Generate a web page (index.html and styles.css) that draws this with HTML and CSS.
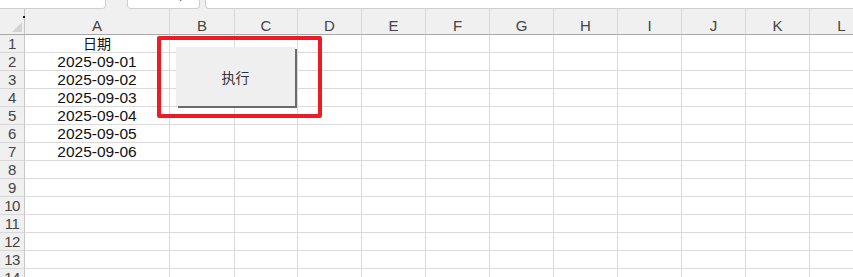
FILE: index.html
```html
<!DOCTYPE html>
<html lang="zh">

<head>
  <meta charset="UTF-8">
  <title>Sheet1</title>
  <link rel="stylesheet" href="styles.css">
</head>

<body>
  <div class="topbar">
    <div class="box box-name"></div>
    <div class="box box-fx"><span class="fx-mark">ʲ</span></div>
    <div class="box box-formula"></div>
  </div>

  <div class="sheet">
    <div class="grid">
      <div class="corner"><span class="dot"></span><span class="tri"></span></div>
      <div class="colhead">A</div>
      <div class="colhead">B</div>
      <div class="colhead">C</div>
      <div class="colhead">D</div>
      <div class="colhead">E</div>
      <div class="colhead">F</div>
      <div class="colhead">G</div>
      <div class="colhead">H</div>
      <div class="colhead">I</div>
      <div class="colhead">J</div>
      <div class="colhead">K</div>
      <div class="colhead">L</div>

      <div class="rowhead">1</div>
      <div class="cell center cjk">日期</div>
      <div class="cell"></div><div class="cell"></div><div class="cell"></div><div class="cell"></div><div class="cell"></div><div class="cell"></div><div class="cell"></div><div class="cell"></div><div class="cell"></div><div class="cell"></div><div class="cell"></div>

      <div class="rowhead">2</div>
      <div class="cell center">2025-09-01</div>
      <div class="cell"></div><div class="cell"></div><div class="cell"></div><div class="cell"></div><div class="cell"></div><div class="cell"></div><div class="cell"></div><div class="cell"></div><div class="cell"></div><div class="cell"></div><div class="cell"></div>

      <div class="rowhead">3</div>
      <div class="cell center">2025-09-02</div>
      <div class="cell"></div><div class="cell"></div><div class="cell"></div><div class="cell"></div><div class="cell"></div><div class="cell"></div><div class="cell"></div><div class="cell"></div><div class="cell"></div><div class="cell"></div><div class="cell"></div>

      <div class="rowhead">4</div>
      <div class="cell center">2025-09-03</div>
      <div class="cell"></div><div class="cell"></div><div class="cell"></div><div class="cell"></div><div class="cell"></div><div class="cell"></div><div class="cell"></div><div class="cell"></div><div class="cell"></div><div class="cell"></div><div class="cell"></div>

      <div class="rowhead">5</div>
      <div class="cell center">2025-09-04</div>
      <div class="cell"></div><div class="cell"></div><div class="cell"></div><div class="cell"></div><div class="cell"></div><div class="cell"></div><div class="cell"></div><div class="cell"></div><div class="cell"></div><div class="cell"></div><div class="cell"></div>

      <div class="rowhead">6</div>
      <div class="cell center">2025-09-05</div>
      <div class="cell"></div><div class="cell"></div><div class="cell"></div><div class="cell"></div><div class="cell"></div><div class="cell"></div><div class="cell"></div><div class="cell"></div><div class="cell"></div><div class="cell"></div><div class="cell"></div>

      <div class="rowhead">7</div>
      <div class="cell center">2025-09-06</div>
      <div class="cell"></div><div class="cell"></div><div class="cell"></div><div class="cell"></div><div class="cell"></div><div class="cell"></div><div class="cell"></div><div class="cell"></div><div class="cell"></div><div class="cell"></div><div class="cell"></div>

      <div class="rowhead">8</div>
      <div class="cell"></div><div class="cell"></div><div class="cell"></div><div class="cell"></div><div class="cell"></div><div class="cell"></div><div class="cell"></div><div class="cell"></div><div class="cell"></div><div class="cell"></div><div class="cell"></div><div class="cell"></div>

      <div class="rowhead">9</div>
      <div class="cell"></div><div class="cell"></div><div class="cell"></div><div class="cell"></div><div class="cell"></div><div class="cell"></div><div class="cell"></div><div class="cell"></div><div class="cell"></div><div class="cell"></div><div class="cell"></div><div class="cell"></div>

      <div class="rowhead">10</div>
      <div class="cell"></div><div class="cell"></div><div class="cell"></div><div class="cell"></div><div class="cell"></div><div class="cell"></div><div class="cell"></div><div class="cell"></div><div class="cell"></div><div class="cell"></div><div class="cell"></div><div class="cell"></div>

      <div class="rowhead">11</div>
      <div class="cell"></div><div class="cell"></div><div class="cell"></div><div class="cell"></div><div class="cell"></div><div class="cell"></div><div class="cell"></div><div class="cell"></div><div class="cell"></div><div class="cell"></div><div class="cell"></div><div class="cell"></div>

      <div class="rowhead">12</div>
      <div class="cell"></div><div class="cell"></div><div class="cell"></div><div class="cell"></div><div class="cell"></div><div class="cell"></div><div class="cell"></div><div class="cell"></div><div class="cell"></div><div class="cell"></div><div class="cell"></div><div class="cell"></div>

      <div class="rowhead">13</div>
      <div class="cell"></div><div class="cell"></div><div class="cell"></div><div class="cell"></div><div class="cell"></div><div class="cell"></div><div class="cell"></div><div class="cell"></div><div class="cell"></div><div class="cell"></div><div class="cell"></div><div class="cell"></div>

      <div class="rowhead">14</div>
      <div class="cell"></div><div class="cell"></div><div class="cell"></div><div class="cell"></div><div class="cell"></div><div class="cell"></div><div class="cell"></div><div class="cell"></div><div class="cell"></div><div class="cell"></div><div class="cell"></div><div class="cell"></div>
    </div>

    <!-- highlight + form button sit over the grid -->
    <div class="highlight"></div>
    <button class="run-btn">执行</button>
  </div>
</body>

</html>
```

FILE: styles.css
```css
* {
  margin: 0;
  padding: 0;
  box-sizing: border-box;
}

html,
body {
  width: 853px;
  height: 277px;
  overflow: hidden;
}

body {
  font-family: 'Liberation Sans', 'Noto Sans CJK SC', Arial, sans-serif;
  background: #f0f0f0;
  color: #111;
}

/* formula bar remnants at the very top */
.topbar {
  display: flex;
  height: 9px;
  background: #f0f0f0;
}

.box {
  height: 9px;
  background: #fff;
  border: 1px solid #cfcfcf;
  border-top: none;
  border-radius: 0 0 4px 4px;
  position: relative;
  overflow: hidden;
}

.box-name {
  width: 106px;
  border-left: none;
  border-radius: 0 0 4px 0;
}

.box-fx {
  width: 73px;
  margin-left: 21px;
}

.fx-mark {
  position: absolute;
  right: 17px;
  top: -9px;
  font-size: 12px;
  color: #555;
}

.box-formula {
  flex: 1;
  margin-left: 5px;
  border-right: none;
  border-radius: 0 0 0 4px;
}

/* the worksheet */
.sheet {
  position: relative;
}

.grid {
  display: grid;
  grid-template-columns: 25px 145px 65px 63px 64px 64px 64px 64px 64px 64px 64px 64px 64px;
  grid-template-rows: 26px repeat(14, 18px);
  background: #fff;
}

.corner {
  background: #f0f0f0;
  border-right: 1px solid #c6c6c6;
  border-bottom: 1px solid #a8a8a8;
  position: relative;
}

.dot {
  position: absolute;
  left: 23px;
  top: 7px;
  width: 2px;
  height: 2px;
  background: #111;
}

.tri {
  position: absolute;
  left: 12px;
  top: 13px;
  width: 0;
  height: 0;
  border-left: 10px solid transparent;
  border-bottom: 10px solid #d4d4d4;
}

.colhead {
  background: #f0f0f0;
  border-bottom: 1px solid #a8a8a8;
  border-right: 1px solid #d8d8d8;
  font-size: 15px;
  color: #444;
  text-align: center;
  line-height: 16px;
  padding-top: 9px;
}

.rowhead {
  background: #f0f0f0;
  border-right: 1px solid #c6c6c6;
  border-bottom: 1px solid #d8d8d8;
  font-size: 15px;
  color: #444;
  text-align: center;
  line-height: 18px;
  letter-spacing: -0.5px;
}

.cell {
  border-right: 1px solid #dadada;
  border-bottom: 1px solid #dadada;
  font-size: 15.5px;
  line-height: 18px;
  white-space: nowrap;
  overflow: hidden;
}

.center {
  text-align: center;
}

.cjk {
  font-size: 14px;
}

.highlight {
  position: absolute;
  left: 157px;
  top: 27px;
  width: 165px;
  height: 82px;
  border: 4px solid #ec1c24;
  border-radius: 2px;
}

.run-btn {
  position: absolute;
  left: 176px;
  top: 38px;
  width: 119px;
  height: 59px;
  background: #efefef;
  border: none;
  box-shadow: 2px 2px 0 #6b6b6b;
  font-family: 'Noto Sans CJK SC', sans-serif;
  font-size: 14px;
  color: #333;
}
```
